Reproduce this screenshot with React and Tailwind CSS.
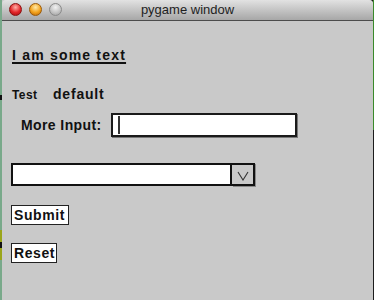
export default function App() {
  const font = { fontFamily: '"Liberation Sans", Arial, sans-serif' };

  return (
    <div className="flex h-[300px] w-[374px] overflow-hidden bg-[#1c1c1c]" style={font}>
      {/* desktop strip on the left */}
      <div className="flex w-[2px] flex-col">
        <div className="h-[95px] bg-[#79a98a]" />
        <div className="h-[5px] bg-[#111]" />
        <div className="h-[130px] bg-[#79a98a]" />
        <div className="h-[12px] bg-[#9aa51a]" />
        <div className="h-[6px] bg-[#111]" />
        <div className="h-[12px] bg-[#9aa51a]" />
        <div className="flex-1 bg-[#79a98a]" />
      </div>

      {/* window */}
      <div className="flex w-[371px] flex-col rounded-tr-[4px] bg-[#c9c9c9]">
        <div className="relative flex h-[20px] items-center justify-center rounded-t-[4px] bg-gradient-to-b from-[#e2e2e2] to-[#a7a7a7]">
          <div className="absolute left-[7px] top-[3px] flex gap-[7px]">
            <span className="h-[13px] w-[13px] rounded-full border border-[#8a1010] bg-[radial-gradient(circle_at_50%_30%,#ffb0a8,#e3262a_55%,#9c0c0f)]" />
            <span className="h-[13px] w-[13px] rounded-full border border-[#9a5a08] bg-[radial-gradient(circle_at_50%_30%,#ffeaa8,#f3a21c_55%,#b26006)]" />
            <span className="h-[13px] w-[13px] rounded-full border border-[#8a8a8a] bg-[radial-gradient(circle_at_50%_30%,#f2f2f2,#c4c4c4_55%,#9a9a9a)]" />
          </div>
          <span className="text-[13px] leading-[20px] text-[#1e1e1e]">pygame window</span>
        </div>
        <div className="h-[1px] bg-[#4c4c4c]" />

        <div className="flex flex-col items-start pl-[9px] text-[#111]">
          <div className="mt-[26px] whitespace-nowrap pl-[1px] text-[14px] font-bold leading-[16px] tracking-[1.2px] underline decoration-[1.5px] underline-offset-[2px]">
            I am some text
          </div>

          <div className="mt-[23px] flex items-baseline whitespace-nowrap">
            <span className="w-[42px] shrink-0 pl-[1px] text-[12px] font-bold leading-[16px] tracking-[0.4px]">Test</span>
            <span className="text-[14px] font-bold leading-[16px] tracking-[0.8px]">default</span>
          </div>

          <div className="mt-[10px] flex items-center">
            <span className="w-[100px] shrink-0 whitespace-nowrap pl-[10px] text-[14px] font-bold leading-[16px] tracking-[0.4px]">
              More Input:
            </span>
            <div className="flex h-[24px] w-[186px] shrink-0 items-center border-2 border-[#1a1a1a] bg-white pl-[5px] shadow-[1px_1px_0_#777]">
              <span className="h-[18px] w-[2px] bg-[#333]" />
            </div>
          </div>

          <div className="mt-[26px] flex h-[23px]">
            <div className="w-[221px] border-2 border-[#111] bg-white" />
            <div className="flex w-[23px] items-center justify-center border-2 border-l-0 border-[#111] bg-[#c9c9c9] shadow-[1px_1px_0_#888]">
              <svg width="12" height="10" viewBox="0 0 12 10" className="mt-[2px]">
                <polyline points="1,1 6,9 11,1" fill="none" stroke="#333" strokeWidth="1.1" />
              </svg>
            </div>
          </div>

          <button className="mt-[19px] h-[20px] w-[58px] border border-[#222] bg-white pl-[2px] text-left text-[14px] font-bold leading-[18px] tracking-[0.6px] text-[#111]">
            Submit
          </button>

          <button className="mt-[18px] h-[20px] w-[46px] border border-[#222] bg-white pl-[2px] text-left text-[14px] font-bold leading-[18px] tracking-[0.6px] text-[#111]">
            Reset
          </button>
        </div>
      </div>

      {/* desktop strip on the right */}
      <div className="flex w-[1px] flex-col">
        <div className="h-[130px] bg-[#3a8a2a]" />
        <div className="flex-1 bg-[#1c1c1c]" />
      </div>
    </div>
  );
}
